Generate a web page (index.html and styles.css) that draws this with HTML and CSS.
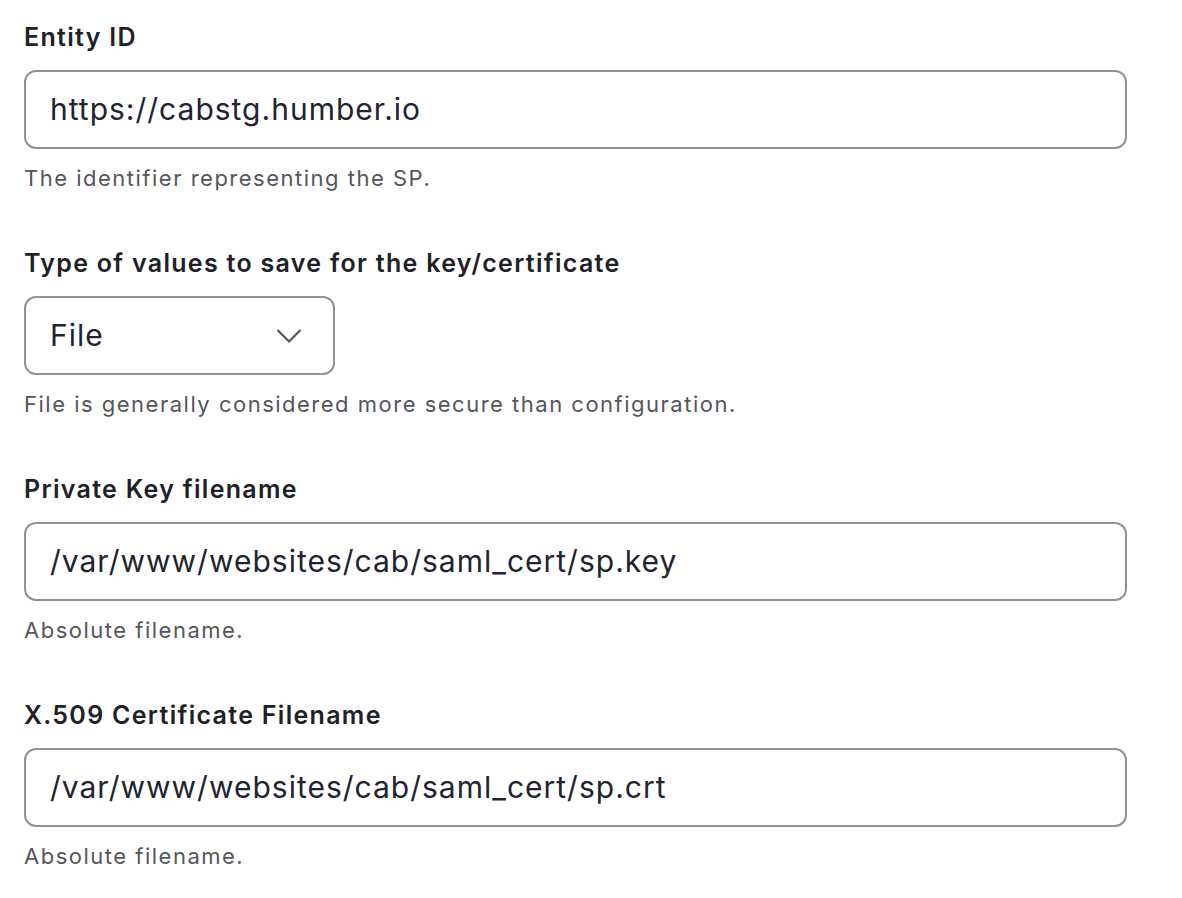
FILE: index.html
```html
<!DOCTYPE html>
<html>
<head>
<meta charset="utf-8">
<link rel="stylesheet" href="styles.css">
</head>
<body>
<form class="form">
  <div class="item">
    <label class="label">Entity ID</label>
    <div class="input">https://cabstg.humber.io</div>
    <div class="desc">The identifier representing the SP.</div>
  </div>
  <div class="item">
    <label class="label">Type of values to save for the key/certificate</label>
    <div class="select"><span>File</span>
      <svg class="chev" width="26" height="16" viewBox="0 0 26 16"><path d="M1.5 2 L13 13.5 L24.5 2" fill="none" stroke="#55565b" stroke-width="2.2"/></svg>
    </div>
    <div class="desc">File is generally considered more secure than configuration.</div>
  </div>
  <div class="item">
    <label class="label">Private Key filename</label>
    <div class="input">/var/www/websites/cab/saml_cert/sp.key</div>
    <div class="desc">Absolute filename.</div>
  </div>
  <div class="item">
    <label class="label">X.509 Certificate Filename</label>
    <div class="input">/var/www/websites/cab/saml_cert/sp.crt</div>
    <div class="desc">Absolute filename.</div>
  </div>
</form>
</body>
</html>
```

FILE: styles.css
```css
html, body {
  margin: 0;
  background: #ffffff;
}
body {
  font-family: Inter, "Noto Sans", sans-serif;
  color: #232429;
}
.form {
  padding: 19px 0 0 24px;
  width: 1103px;
  display: flex;
  flex-direction: column;
}
.item {
  display: flex;
  flex-direction: column;
  align-items: flex-start;
  height: 226px;
}
.label {
  font-size: 25px;
  font-weight: 600;
  line-height: 36px;
  letter-spacing: 1.3px;
  margin-bottom: 15px;
  color: #202127;
}
.input, .select {
  box-sizing: border-box;
  height: 79px;
  border: 2px solid #8e929c;
  border-radius: 12px;
  padding: 0 24px;
  font-size: 30px;
  line-height: 75px;
  letter-spacing: 1px;
  color: #222330;
  background: #fff;
}
.input {
  width: 1103px;
}
.select {
  width: 311px;
  display: flex;
  align-items: center;
  justify-content: space-between;
  padding-right: 31px;
}
.chev {
  display: block;
}
.desc {
  margin-top: 14px;
  font-size: 22px;
  line-height: 30px;
  letter-spacing: 1.5px;
  color: #55565b;
}
```
